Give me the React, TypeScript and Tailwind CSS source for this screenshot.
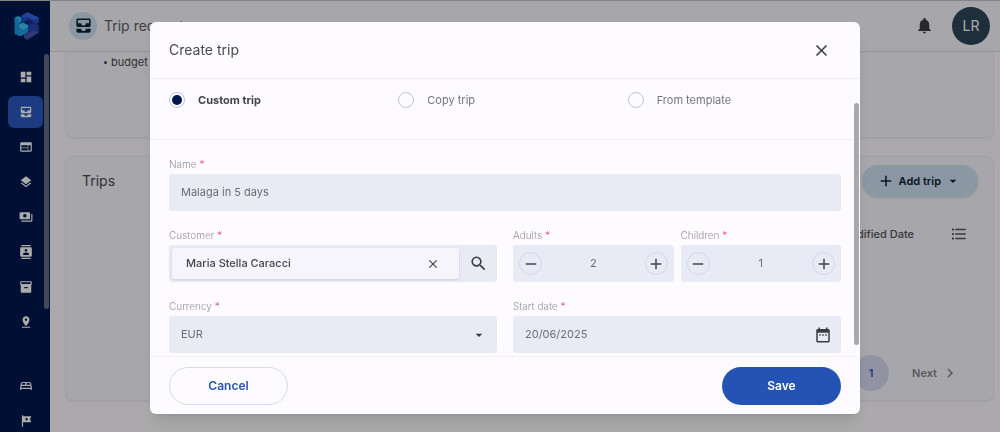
import React, { useState } from "react";
import clsx from "clsx";
import {
  MdAdd,
  MdAllInbox,
  MdArrowDropDown,
  MdChevronRight,
  MdClose,
  MdContacts,
  MdDashboard,
  MdDateRange,
  MdFormatListBulleted,
  MdInventory2,
  MdLayers,
  MdNotifications,
  MdOutlineBed,
  MdPayments,
  MdPinDrop,
  MdRemove,
  MdSearch,
  MdTour,
  MdWeb,
} from "react-icons/md";
import type { IconType } from "react-icons";

interface NavItem {
  label: string;
  icon: IconType;
}

const MAIN_NAV: NavItem[] = [
  { label: "Dashboard", icon: MdDashboard },
  { label: "Trip requests", icon: MdAllInbox },
  { label: "Pages", icon: MdWeb },
  { label: "Templates", icon: MdLayers },
  { label: "Payments", icon: MdPayments },
  { label: "Contacts", icon: MdContacts },
  { label: "Inventory", icon: MdInventory2 },
  { label: "Places", icon: MdPinDrop },
];

const EXTRA_NAV: NavItem[] = [
  { label: "Hotels", icon: MdOutlineBed },
  { label: "Tours", icon: MdTour },
];

const TRIP_TYPES = ["Custom trip", "Copy trip", "From template"];

const Logo = () => (
  <svg viewBox="0 0 78 86" className="h-7 w-[26px]" aria-hidden="true">
    <path d="M22 12 40 1l36 17v13l-8 5 8 5v21L40 85 30 78V66l-8-6z" fill="#2c3f9c" />
    <path d="M22 12 40 1l36 17-14 8-22-11-18 10z" fill="#3468e4" />
    <path d="M22 12 40 22v14l-18-6z" fill="#2450c8" />
    <path d="M62 26 76 18v13l-14 9z" fill="#2a4cc4" />
    <path d="M26 32 42 23l20 10v10L46 52 26 44z" fill="#142c8c" />
    <path d="M42 40 56 34l10 6v16l-10 5-14-8z" fill="#2846b4" />
    <path d="M30 72 62 56l14 6-36 23-10-7z" fill="#4a57ac" />
    <path d="M1 18 12 12l9 5v14l-7 6-13-6z" fill="#2fbcf0" />
    <path d="M1 18 14 25v45L1 68z" fill="#1e9be4" />
    <path d="M14 38 26 32l16 8v8l-14 8-14-6z" fill="#38c6f4" />
    <path d="M14 50 28 56l14-8v14L22 74 8 72z" fill="#1fa0e6" />
  </svg>
);

const NavList = ({ items, active }: { items: NavItem[]; active?: string }) => (
  <ul className="flex flex-col gap-[3px]">
    {items.map(({ label, icon: Icon }) => (
      <li key={label}>
        <a
          href="#"
          aria-label={label}
          className={clsx(
            "flex h-8 items-center justify-center rounded-md text-white",
            label === active && "bg-[#2a59bf]"
          )}
        >
          <Icon size={14} />
        </a>
      </li>
    ))}
  </ul>
);

const Sidebar = () => (
  <aside className="relative flex w-[50px] shrink-0 flex-col overflow-hidden bg-[#001850]">
    <div className="flex h-[61px] shrink-0 justify-center pt-3 pl-1">
      <Logo />
    </div>
    <nav className="flex flex-col gap-8 pr-[7px] pl-2">
      <NavList items={MAIN_NAV} active="Trip requests" />
      <NavList items={EXTRA_NAV} />
    </nav>
    <div className="absolute top-[54px] right-[1px] h-[255px] w-[5px] rounded-full bg-[#656e88]" />
  </aside>
);

const TopBar = () => (
  <header className="flex h-[52px] shrink-0 items-center justify-between border-b border-[#dcdce2] bg-[#f9f9ff] pr-[10px] pl-[19px]">
    <div className="flex items-center gap-[7px]">
      <span className="flex size-7 items-center justify-center rounded-full bg-[#cfe2f3] text-[#0c2233]">
        <MdAllInbox size={19} />
      </span>
      <h1 className="text-sm text-[#5f5f66]">Trip requests</h1>
    </div>
    <div className="flex items-center gap-[18px]">
      <button type="button" aria-label="Notifications" className="text-[#3c3c40]">
        <MdNotifications size={19} />
      </button>
      <button
        type="button"
        className="size-[38px] rounded-full bg-[#2f4559] text-sm text-white"
      >
        LR
      </button>
    </div>
  </header>
);

const TripsCard = () => (
  <section className="flex h-[245px] shrink-0 flex-col rounded-lg border border-[#efeff5] bg-[#f9f9ff] pt-2 pr-[15px] pl-4 shadow-xs">
    <div className="flex items-center justify-between">
      <h2 className="text-sm text-[#4a4a50]">Trips</h2>
      <button
        type="button"
        className="flex h-8 items-center gap-1 rounded-full bg-[#cfe2f3] pr-[17px] pl-[15px] text-[11px] font-semibold text-[#0c2233] shadow-sm"
      >
        <MdAdd size={18} />
        Add trip
        <MdArrowDropDown size={16} />
      </button>
    </div>
    <table className="mt-6 w-full text-[11px] text-[#54545a]">
      <thead>
        <tr className="h-[26px]">
          <th className="text-right font-medium">Modified Date</th>
          <th className="w-16 pr-2.5">
            <MdFormatListBulleted size={18} className="ml-auto" />
          </th>
        </tr>
      </thead>
    </table>
    <div className="mt-auto mb-[9px] flex items-center justify-end pr-[19px] text-[11px] font-semibold">
      <button type="button" className="size-9 rounded-full bg-[#d8dcf2] text-[#2a59bf]">
        1
      </button>
      <button type="button" className="ml-[23px] flex items-center gap-1 text-[#85858c]">
        Next
        <MdChevronRight size={18} />
      </button>
    </div>
  </section>
);

interface FieldProps {
  id: string;
  label: string;
  children: React.ReactNode;
}

const Field = ({ id, label, children }: FieldProps) => (
  <div className="flex min-w-0 flex-col gap-0.5">
    <label htmlFor={id} className="text-[10px] leading-4 font-light text-[#96959c]">
      {label} <span className="text-[#f5377c]">*</span>
    </label>
    <div className="flex h-[37px] items-center rounded-[3px] bg-[#e8eaf6] text-[11px] text-[#6c6c74]">
      {children}
    </div>
  </div>
);

const Counter = ({ id, label, initial }: { id: string; label: string; initial: number }) => {
  const [value, setValue] = useState(initial);
  const btn =
    "flex size-[23px] shrink-0 items-center justify-center rounded-full border border-[#d3d7ea] text-[#444448]";

  return (
    <Field id={id} label={label}>
      <div className="flex w-full items-center px-1.5">
        <button
          type="button"
          aria-label={`Fewer ${label}`}
          className={btn}
          onClick={() => setValue(Math.max(0, value - 1))}
        >
          <MdRemove size={18} />
        </button>
        <input
          id={id}
          value={value}
          onChange={(e) => setValue(Number(e.target.value) || 0)}
          className="w-full min-w-0 bg-transparent text-center outline-none"
        />
        <button
          type="button"
          aria-label={`More ${label}`}
          className={btn}
          onClick={() => setValue(value + 1)}
        >
          <MdAdd size={18} />
        </button>
      </div>
    </Field>
  );
};

const CreateTripDialog = () => {
  const [tripType, setTripType] = useState(TRIP_TYPES[0]);

  return (
    <div
      role="dialog"
      aria-labelledby="dialog-title"
      className="relative flex max-h-full w-[71vw] flex-col overflow-hidden rounded-md bg-[#fdfbff] shadow-lg"
    >
      <header className="flex h-[57px] shrink-0 items-center justify-between border-b border-[#efedf2] pr-[29px] pl-[19px]">
        <h2 id="dialog-title" className="text-sm text-[#4a4a4f]">
          Create trip
        </h2>
        <button type="button" aria-label="Close" className="text-[#3c3c40]">
          <MdClose size={19} />
        </button>
      </header>

      <form className="min-h-0 flex-1 overflow-y-auto [scrollbar-width:none]">
        <div className="grid h-[61px] grid-cols-3 gap-4 border-b border-[#efedf2] px-[19px] pt-[11px]">
          {TRIP_TYPES.map((type) => (
            <label
              key={type}
              className={clsx(
                "flex h-5 items-center gap-[13px] text-[11px]",
                type === tripType ? "font-bold text-[#444449]" : "text-[#75757c]"
              )}
            >
              <input
                type="radio"
                name="trip-type"
                checked={type === tripType}
                onChange={() => setTripType(type)}
                className="size-4 appearance-none rounded-full border border-[#bfc4da] bg-clip-content p-0.5 checked:bg-[#001850]"
              />
              {type}
            </label>
          ))}
        </div>

        <div className="grid grid-cols-2 gap-4 px-[19px] pt-4 pb-10">
          <div className="col-span-2">
            <Field id="name" label="Name">
              <input
                id="name"
                defaultValue="Malaga in 5 days"
                className="w-full bg-transparent px-3 outline-none"
              />
            </Field>
          </div>

          <Field id="customer" label="Customer">
            <div className="ml-[3px] flex h-[31px] flex-1 items-center rounded-[3px] bg-[#f6f5fc] pr-[19px] pl-3.5 text-[#444449] shadow-sm">
              <input
                id="customer"
                defaultValue="Maria Stella Caracci"
                className="w-full min-w-0 bg-transparent font-medium outline-none"
              />
              <button type="button" aria-label="Clear customer">
                <MdClose size={14} />
              </button>
            </div>
            <button
              type="button"
              aria-label="Search customer"
              className="flex w-[38px] justify-center text-[#3c3c40]"
            >
              <MdSearch size={19} />
            </button>
          </Field>

          <div className="grid grid-cols-2 gap-[7px]">
            <Counter id="adults" label="Adults" initial={2} />
            <Counter id="children" label="Children" initial={1} />
          </div>

          <Field id="currency" label="Currency">
            <div className="grid w-full items-center">
              <select
                id="currency"
                className="col-start-1 row-start-1 w-full appearance-none bg-transparent px-3 outline-none"
              >
                <option>EUR</option>
              </select>
              <MdArrowDropDown
                size={16}
                className="pointer-events-none col-start-1 row-start-1 mr-2.5 justify-self-end text-[#3c3c40]"
              />
            </div>
          </Field>

          <Field id="start-date" label="Start date">
            <input
              id="start-date"
              defaultValue="20/06/2025"
              className="w-full min-w-0 bg-transparent pl-3 outline-none"
            />
            <button type="button" aria-label="Open calendar" className="pr-[9px] text-[#3c3c40]">
              <MdDateRange size={18} />
            </button>
          </Field>
        </div>
      </form>
      <div className="absolute top-[81px] right-[1px] h-[242px] w-[5px] rounded-full bg-[#a9a8ac]" />

      <footer className="flex h-[58px] shrink-0 items-center justify-between border-t border-[#f3f1f6] px-[19px] text-xs font-semibold">
        <button
          type="button"
          className="h-[38px] w-[119px] rounded-full border border-[#d3daf2] text-[#2453b4]"
        >
          Cancel
        </button>
        <button type="button" className="h-[38px] w-[119px] rounded-full bg-[#2453b4] text-white">
          Save
        </button>
      </footer>
    </div>
  );
};

export default function App() {
  return (
    <div className="flex h-screen overflow-hidden bg-[#fffdff] font-['Inter',sans-serif]">
      <Sidebar />
      <div className="flex min-w-0 flex-1 flex-col">
        <TopBar />
        <main className="flex flex-1 flex-col gap-[18px] overflow-hidden pr-[6px] pl-[15px]">
          <section className="h-[86px] shrink-0 rounded-b-lg border border-t-0 border-[#efeff5] bg-[#f9f9ff] shadow-xs">
            <ul className="pl-[38px] text-[11px] leading-5 text-[#4a4a50]">
              <li className="flex items-center gap-1">
                <span className="size-[3px] rounded-full bg-[#4a4a50]" />
                budget
              </li>
            </ul>
          </section>
          <TripsCard />
        </main>
      </div>

      <div className="fixed inset-0 flex items-start justify-center border-t border-[#838285] bg-black/33 pt-[21px] pb-[18px] pl-[10px]">
        <CreateTripDialog />
      </div>
    </div>
  );
}
